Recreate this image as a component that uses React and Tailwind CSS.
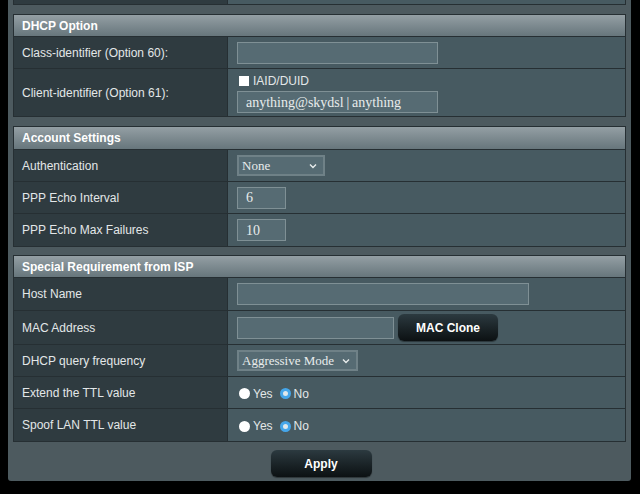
const sans = { fontFamily: '"Liberation Sans", Arial, sans-serif' }
const serif = { fontFamily: '"Liberation Serif", "Times New Roman", serif' }

function Header({ title, h = 'h-[22px]' }) {
  return (
    <div className={`${h} flex items-center pl-[8px] bg-gradient-to-b from-[#949fa4] to-[#67767c] border-b border-[#262f33] text-[12px] font-bold text-white`}>
      {title}
    </div>
  )
}

function Row({ label, h = 'h-[32px]', children, last }) {
  return (
    <div className={`flex ${h} ${last ? '' : 'border-b border-[#262f33]'}`}>
      <div className="w-[214px] shrink-0 bg-[#2f3b40] border-r border-[#262f33] flex items-center pl-[8px] text-[12px] text-[#e3e7e8]">
        {label}
      </div>
      <div className="flex-1 bg-[#475a61] flex items-center pl-[9px]">{children}</div>
    </div>
  )
}

function TextBox({ w, value }) {
  return (
    <div
      className={`${w} h-[22px] bg-[#566b73] border border-[#7f9095] flex items-center pl-[8px] text-[14px] text-[#e8ecec]`}
      style={serif}
    >
      {value}
    </div>
  )
}

function Select({ w, value }) {
  return (
    <div
      className={`${w} h-[21px] bg-[#566b73] border-2 border-[#6f8187] flex items-center justify-between pl-[3px] pr-[6px] text-[13px] text-[#e8ecec]`}
      style={serif}
    >
      <span>{value}</span>
      <svg width="8" height="6" viewBox="0 0 8 6">
        <path d="M1 1.5 L4 4.5 L7 1.5" stroke="#e8ecec" strokeWidth="1.4" fill="none" />
      </svg>
    </div>
  )
}

function Radio({ checked, label }) {
  return (
    <span className="flex items-center gap-[3px] mr-[7px] text-[12px] text-[#e3e7e8]">
      {checked ? (
        <span className="w-[11px] h-[11px] rounded-full border-[3px] border-[#45a6ea] bg-[#dfe8ec]" />
      ) : (
        <span className="w-[11px] h-[11px] rounded-full bg-white" />
      )}
      {label}
    </span>
  )
}

function DarkButton({ w, children }) {
  return (
    <div className={`${w} h-[27px] rounded-[6px] bg-gradient-to-b from-[#2c3a40] to-[#0c1113] flex items-center justify-center text-[12px] font-bold text-white shadow-[0_1px_1px_rgba(0,0,0,0.4)]`}>
      {children}
    </div>
  )
}

export default function App() {
  return (
    <div className="w-[640px] h-[494px] bg-black overflow-hidden" style={sans}>
      <div className="ml-[8px] w-[623px] h-[481px] bg-[#4d5a5f] rounded-b-[3px] px-[5px] flex flex-col">
        <div className="flex h-[5px] border-b border-x border-[#262f33]">
          <div className="w-[214px] bg-[#2f3b40] border-r border-[#262f33]" />
          <div className="flex-1 bg-[#475a61]" />
        </div>

        <div className="mt-[9px] border border-[#262f33]">
          <Header title="DHCP Option" />
          <Row label="Class-identifier (Option 60):">
            <TextBox w="w-[201px]" />
          </Row>
          <Row label="Client-identifier (Option 61):" h="h-[47px]" last>
            <div className="flex flex-col gap-[2px] pt-[1px]">
              <span className="flex items-center gap-[4px] h-[16px] text-[12px] text-[#e3e7e8] pl-[2px]">
                <span className="w-[10px] h-[10px] bg-white" />
                IAID/DUID
              </span>
              <TextBox w="w-[201px]" value={'anything@skydsl\u2009|\u2009anything'} />
            </div>
          </Row>
        </div>

        <div className="mt-[9px] border border-[#262f33]">
          <Header title="Account Settings" h="h-[23px]" />
          <Row label="Authentication">
            <Select w="w-[88px]" value="None" />
          </Row>
          <Row label="PPP Echo Interval">
            <TextBox w="w-[49px]" value="6" />
          </Row>
          <Row label="PPP Echo Max Failures" last>
            <TextBox w="w-[49px]" value="10" />
          </Row>
        </div>

        <div className="mt-[8px] border border-[#262f33]">
          <Header title="Special Requirement from ISP" />
          <Row label="Host Name" h="h-[33px]">
            <TextBox w="w-[292px]" />
          </Row>
          <Row label="MAC Address" h="h-[34px]">
            <div className="flex items-center gap-[4px]">
              <TextBox w="w-[157px]" />
              <DarkButton w="w-[100px]">MAC Clone</DarkButton>
            </div>
          </Row>
          <Row label="DHCP query frequency">
            <Select w="w-[121px]" value="Aggressive Mode" />
          </Row>
          <Row label="Extend the TTL value">
            <div className="flex items-center pl-[2px] pt-[2px]">
              <Radio label="Yes" />
              <Radio checked label="No" />
            </div>
          </Row>
          <Row label="Spoof LAN TTL value" last>
            <div className="flex items-center pl-[2px] pt-[2px]">
              <Radio label="Yes" />
              <Radio checked label="No" />
            </div>
          </Row>
        </div>

        <div className="flex justify-center mt-[8px] pl-[3px]">
          <DarkButton w="w-[101px]">Apply</DarkButton>
        </div>
      </div>
    </div>
  )
}
